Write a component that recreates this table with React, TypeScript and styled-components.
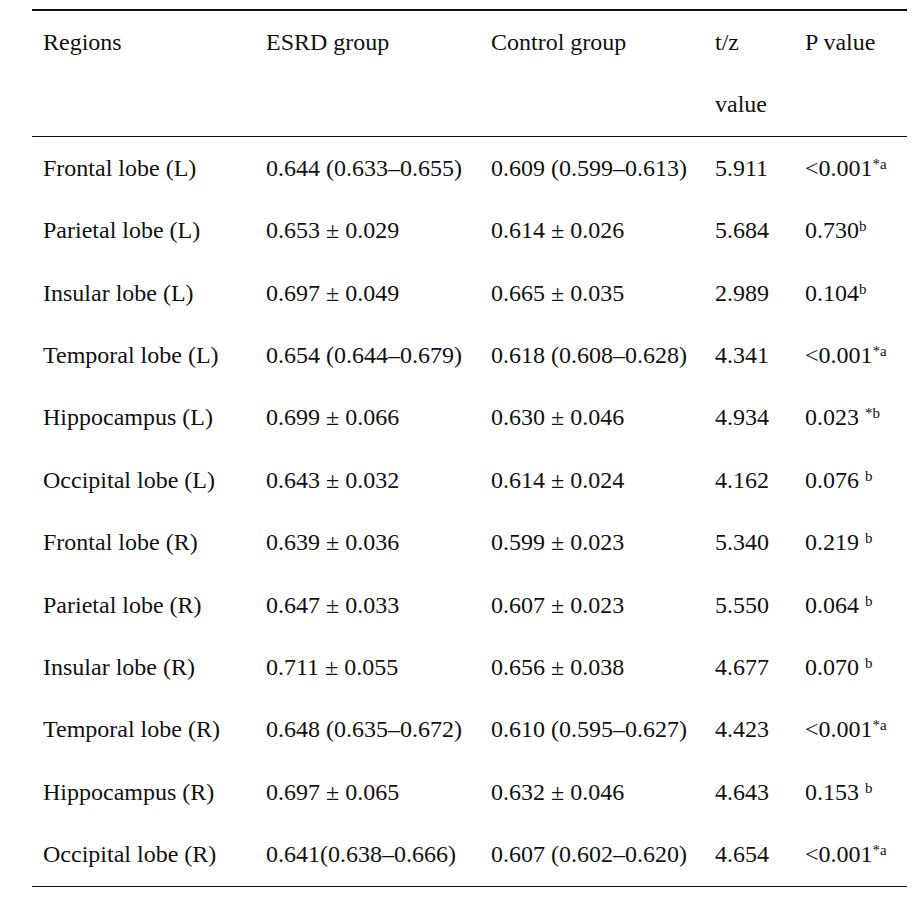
import { FC } from 'react';
import styled, { createGlobalStyle } from 'styled-components';

const GlobalStyle = createGlobalStyle`
  body {
    margin: 0;
    background: #fff;
    color: #111;
    font-family: 'Liberation Serif', 'Times New Roman', serif;
  }
`;

interface Row {
  region: string;
  esrd: string;
  control: string;
  t: string;
  p: string;
  mark: string;
}

const rows: Row[] = [
  { region: 'Frontal lobe (L)', esrd: '0.644 (0.633–0.655)', control: '0.609 (0.599–0.613)', t: '5.911', p: '<0.001', mark: '*a' },
  { region: 'Parietal lobe (L)', esrd: '0.653 ± 0.029', control: '0.614 ± 0.026', t: '5.684', p: '0.730', mark: 'b' },
  { region: 'Insular lobe (L)', esrd: '0.697 ± 0.049', control: '0.665 ± 0.035', t: '2.989', p: '0.104', mark: 'b' },
  { region: 'Temporal lobe (L)', esrd: '0.654 (0.644–0.679)', control: '0.618 (0.608–0.628)', t: '4.341', p: '<0.001', mark: '*a' },
  { region: 'Hippocampus (L)', esrd: '0.699 ± 0.066', control: '0.630 ± 0.046', t: '4.934', p: '0.023 ', mark: '*b' },
  { region: 'Occipital lobe (L)', esrd: '0.643 ± 0.032', control: '0.614 ± 0.024', t: '4.162', p: '0.076 ', mark: 'b' },
  { region: 'Frontal lobe (R)', esrd: '0.639 ± 0.036', control: '0.599 ± 0.023', t: '5.340', p: '0.219 ', mark: 'b' },
  { region: 'Parietal lobe (R)', esrd: '0.647 ± 0.033', control: '0.607 ± 0.023', t: '5.550', p: '0.064 ', mark: 'b' },
  { region: 'Insular lobe (R)', esrd: '0.711 ± 0.055', control: '0.656 ± 0.038', t: '4.677', p: '0.070 ', mark: 'b' },
  { region: 'Temporal lobe (R)', esrd: '0.648 (0.635–0.672)', control: '0.610 (0.595–0.627)', t: '4.423', p: '<0.001', mark: '*a' },
  { region: 'Hippocampus (R)', esrd: '0.697 ± 0.065', control: '0.632 ± 0.046', t: '4.643', p: '0.153 ', mark: 'b' },
  { region: 'Occipital lobe (R)', esrd: '0.641(0.638–0.666)', control: '0.607 (0.602–0.620)', t: '4.654', p: '<0.001', mark: '*a' },
];

const App: FC = () => (
  <>
    <GlobalStyle />
    <Page>
      <Table>
        <HeaderRow>
          <Cell>Regions</Cell>
          <Cell>ESRD group</Cell>
          <Cell>Control group</Cell>
          <Cell>
            t/z
            <br />
            value
          </Cell>
          <Cell>P value</Cell>
        </HeaderRow>
        <Body>
          {rows.map((r) => (
            <BodyRow key={r.region}>
              <Cell>{r.region}</Cell>
              <Cell>{r.esrd}</Cell>
              <Cell>{r.control}</Cell>
              <Cell>{r.t}</Cell>
              <Cell>
                {r.p}
                <Sup>{r.mark}</Sup>
              </Cell>
            </BodyRow>
          ))}
        </Body>
      </Table>
    </Page>
  </>
);

export default App;

const Page = styled.div`
  width: 915px;
  height: 897px;
  padding-top: 9px;
  box-sizing: border-box;
`;

const Table = styled.div`
  margin-left: 32px;
  width: 875px;
  border-top: 2px solid #111;
  border-bottom: 1px solid #111;
`;

const cols = '223px 225px 224px 90px 113px';

const HeaderRow = styled.div`
  display: grid;
  grid-template-columns: ${cols};
  border-bottom: 1px solid #111;
`;

const Body = styled.div`
  display: flex;
  flex-direction: column;
`;

const BodyRow = styled.div`
  display: grid;
  grid-template-columns: ${cols};
  height: 62.4px;
`;

const Cell = styled.div`
  padding-left: 11px;
  font-size: 24px;
  line-height: 62.4px;
  white-space: nowrap;
`;

const Sup = styled.sup`
  font-size: 15px;
  line-height: 0;
  vertical-align: 7px;
`;
